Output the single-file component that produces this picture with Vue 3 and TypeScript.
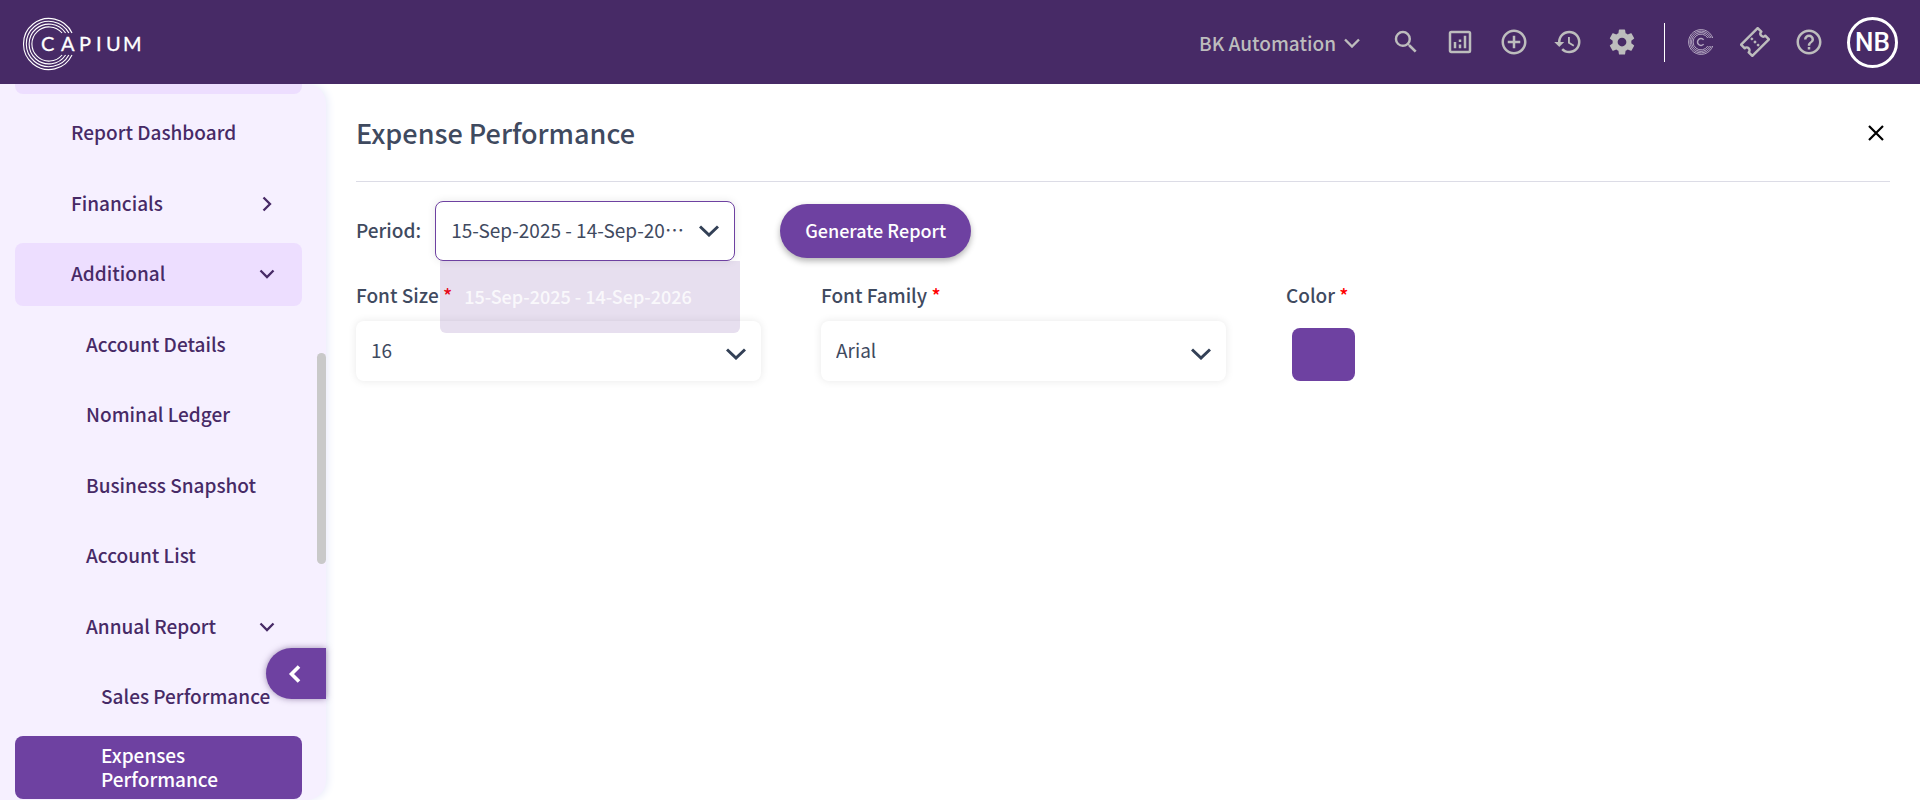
<script setup lang="ts">
import { ref } from 'vue'

interface NavItem {
  label: string
  level: 1 | 2 | 3
  state?: 'open' | 'active'
  chevron?: 'right' | 'down'
}

const items: NavItem[] = [
  { label: 'Report Dashboard', level: 1 },
  { label: 'Financials', level: 1, chevron: 'right' },
  { label: 'Additional', level: 1, state: 'open', chevron: 'down' },
  { label: 'Account Details', level: 2 },
  { label: 'Nominal Ledger', level: 2 },
  { label: 'Business Snapshot', level: 2 },
  { label: 'Account List', level: 2 },
  { label: 'Annual Report', level: 2, chevron: 'down' },
  { label: 'Sales Performance', level: 3 },
  { label: 'Expenses Performance', level: 3, state: 'active' },
]

const periodLabel = '15-Sep-2025 - 14-Sep-2026'
const period = ref(periodLabel)
const fontSize = ref('16')
const fontFamily = ref('Arial')
const color = ref('#6e41a1')
const logoRings = [25.5, 22.7, 19.9, 17.1]
const markRings = [12.4, 10.9, 9.4, 7.9]

// Ring of radius r round (cx, cy), open to the right where |y - cy| < gap.
function ring(r: number, cx: number, cy: number, gap: number): string {
  const x = cx + Math.sqrt(r * r - gap * gap)
  return `M${x} ${cy - gap}A${r} ${r} 0 1 0 ${x} ${cy + gap}`
}
</script>

<template>
  <div class="page">
    <header class="topbar">
      <a class="brand" href="#" aria-label="Capium">
        <svg width="124" height="58" viewBox="0 0 124 58">
          <g fill="none" stroke="#fff" stroke-width="1.1">
            <path v-for="r in logoRings" :key="r" :d="ring(r, 28, 31, 11)" />
          </g>
          <text x="20 40 58 75 85 102" y="38" fill="#fff" stroke="#fff" stroke-width="0.3" font-size="20">CAPIUM</text>
        </svg>
      </a>
      <div class="tools">
        <button class="company" type="button">
          BK Automation
          <svg width="16" height="10" viewBox="0 0 16 10"><path d="M1 1.500 8 8.500 15 1.500" fill="none" stroke="currentColor" stroke-width="2.4" /></svg>
        </button>
        <button class="tool" type="button" aria-label="Search">
          <svg viewBox="0 0 24 24"><path fill="currentColor" d="M15.500 14h-.79l-.28-.27A6.470 6.470 0 0 0 16 9.500 6.500 6.500 0 1 0 9.500 16c1.610 0 3.090-.59 4.230-1.570l.27.28v.79l5 4.990L20.490 19l-4.990-5zm-6 0C7.010 14 5 11.990 5 9.500S7.010 5 9.500 5 14 7.010 14 9.500 11.990 14 9.500 14z" /></svg>
        </button>
        <button class="tool" type="button" aria-label="Analytics">
          <svg viewBox="0 0 24 24"><path fill="currentColor" d="M19 3H5a2 2 0 0 0-2 2v14c0 1.100.9 2 2 2h14a2 2 0 0 0 2-2V5a2 2 0 0 0-2-2zm0 16H5V5h14v14zM7 12h2v5H7zM15 7h2v10h-2zM11 14h2v3h-2zM11 10h2v2h-2z" /></svg>
        </button>
        <button class="tool" type="button" aria-label="Add">
          <svg viewBox="0 0 24 24"><path fill="currentColor" d="M13 7h-2v4H7v2h4v4h2v-4h4v-2h-4V7zm-1-5C6.480 2 2 6.480 2 12s4.480 10 10 10 10-4.480 10-10S17.520 2 12 2zm0 18c-4.410 0-8-3.590-8-8s3.590-8 8-8 8 3.590 8 8-3.590 8-8 8z" /></svg>
        </button>
        <button class="tool" type="button" aria-label="History">
          <svg viewBox="0 0 24 24"><path fill="currentColor" d="M13 3a9 9 0 0 0-9 9H1l3.890 3.890.070.140L9 12H6c0-3.870 3.130-7 7-7s7 3.130 7 7-3.130 7-7 7c-1.930 0-3.680-.790-4.940-2.060l-1.420 1.420A8.950 8.950 0 0 0 13 21a9 9 0 0 0 0-18zm-1 5v5l4.280 2.540.720-1.210-3.500-2.080V8H12z" /></svg>
        </button>
        <button class="tool" type="button" aria-label="Settings">
          <svg viewBox="0 0 24 24"><path fill="currentColor" d="M19.500 12c0-.340-.030-.660-.070-.980l2.110-1.650c.190-.150.240-.420.120-.640l-2-3.460c-.120-.220-.390-.300-.610-.220l-2.490 1c-.520-.400-1.080-.730-1.690-.980l-.380-2.650A.490.490 0 0 0 14 2h-4c-.250 0-.460.180-.490.420l-.380 2.650c-.610.250-1.170.590-1.690.980l-2.490-1c-.230-.090-.490 0-.610.220l-2 3.460c-.130.220-.070.490.120.640l2.110 1.650c-.040.320-.070.650-.070.980s.030.660.070.980l-2.110 1.650c-.190.150-.240.420-.120.640l2 3.460c.120.220.390.300.610.220l2.490-1c.520.400 1.080.730 1.690.980l.380 2.650c.030.240.240.420.490.420h4c.250 0 .460-.180.490-.420l.380-2.650c.610-.250 1.170-.590 1.690-.980l2.490 1c.230.090.490 0 .610-.220l2-3.460c.120-.220.070-.490-.120-.640l-2.110-1.650c.040-.320.070-.640.070-.980zM12 15.500a3.500 3.500 0 1 1 0-7 3.500 3.500 0 0 1 0 7z" /></svg>
        </button>
        <span class="divider"></span>
        <button class="tool" type="button" aria-label="Capium apps">
          <svg class="mark" viewBox="0 0 26 26">
            <g fill="none" stroke="#b3a6c0">
              <path v-for="r in markRings" :key="r" :d="ring(r, 13, 13, 4)" />
              <path d="M15.600 10.900a3.400 3.400 0 1 0 0 4.200" stroke-width="1.500" />
            </g>
          </svg>
        </button>
        <button class="tool" type="button" aria-label="Tickets">
          <svg viewBox="0 0 32 32"><g transform="rotate(-45 16 16)"><path d="M3.500 7.500h25v5.500a3 3 0 0 0 0 6v5.500h-25V19a3 3 0 0 0 0-6z" fill="none" stroke="currentColor" stroke-width="2.600" stroke-linejoin="round" /><path d="M14.700 10h2.600v2.600h-2.600zM14.700 14.700h2.600v2.600h-2.600zM14.700 19.400h2.600v2.600h-2.600z" fill="currentColor" /></g></svg>
        </button>
        <button class="tool" type="button" aria-label="Help">
          <svg viewBox="0 0 24 24"><path fill="currentColor" d="M11 18h2v-2h-2v2zm1-16C6.480 2 2 6.480 2 12s4.480 10 10 10 10-4.480 10-10S17.520 2 12 2zm0 18c-4.410 0-8-3.590-8-8s3.590-8 8-8 8 3.590 8 8-3.590 8-8 8zm0-14a4 4 0 0 0-4 4h2c0-1.100.9-2 2-2s2 .9 2 2c0 2-3 1.750-3 5h2c0-2.250 3-2.500 3-5a4 4 0 0 0-4-4z" /></svg>
        </button>
        <button class="avatar" type="button">NB</button>
      </div>
    </header>

    <div class="body">
      <aside class="sidebar">
        <nav class="nav" aria-label="Reports">
          <div class="peek"></div>
          <a
            v-for="item in items"
            :key="item.label"
            href="#"
            class="item"
            :class="['level-' + item.level, item.state]"
          >
            <span class="item-label">{{ item.label }}</span>
            <svg v-if="item.chevron" class="chevron" :class="item.chevron" viewBox="0 0 16 16"><path d="M1.500 4.500 8 11l6.500-6.500" fill="none" stroke="currentColor" stroke-width="2.300" /></svg>
          </a>
        </nav>
        <div class="thumb"></div>
        <button class="collapse" type="button" aria-label="Collapse menu">
          <svg width="14" height="20" viewBox="0 0 14 20"><path d="M11 2.500 3.500 10l7.500 7.500" fill="none" stroke="#fff" stroke-width="3.600" /></svg>
        </button>
      </aside>

      <main class="content">
        <div class="heading">
          <h1>Expense Performance</h1>
          <button class="close" type="button" aria-label="Close">
            <svg width="16" height="16" viewBox="0 0 16 16"><path d="M1 1l14 14M15 1 1 15" fill="none" stroke="#000" stroke-width="2.200" /></svg>
          </button>
        </div>

        <div class="period-row">
          <label for="period">Period:</label>
          <div class="select-wrap period">
            <select id="period" v-model="period"><option>{{ periodLabel }}</option></select>
            <svg class="arrow" viewBox="0 0 20 12"><path d="M1 1.500 10 10l9-8.500" fill="none" stroke="currentColor" stroke-width="3" /></svg>
            <div class="menu">{{ periodLabel }}</div>
          </div>
          <button class="generate" type="button">Generate Report</button>
        </div>

        <div class="fields">
          <div class="field">
            <label for="size">Font Size <span class="req">*</span></label>
            <div class="select-wrap">
              <select id="size" v-model="fontSize"><option>16</option></select>
              <svg class="arrow" viewBox="0 0 20 12"><path d="M1 1.500 10 10l9-8.500" fill="none" stroke="currentColor" stroke-width="3" /></svg>
            </div>
          </div>
          <div class="field">
            <label for="family">Font Family <span class="req">*</span></label>
            <div class="select-wrap">
              <select id="family" v-model="fontFamily"><option>Arial</option></select>
              <svg class="arrow" viewBox="0 0 20 12"><path d="M1 1.500 10 10l9-8.500" fill="none" stroke="currentColor" stroke-width="3" /></svg>
            </div>
          </div>
          <div class="field">
            <label for="color">Color <span class="req">*</span></label>
            <input id="color" v-model="color" class="swatch" type="color" />
          </div>
        </div>
      </main>
    </div>
  </div>
</template>

<style scoped>
.page {
  display: flex;
  flex-direction: column;
  height: 100vh;
  overflow: hidden;
  background: #fff;
  color: #3f4a5f;
  font-family: "Noto Sans CJK KR", "Noto Sans", sans-serif;
  font-size: 19px;
  font-weight: 500;
  line-height: 24px;
}
button,
select,
input {
  margin: 0;
  border: 0;
  padding: 0;
  background: none;
  color: inherit;
  font: inherit;
}
button { cursor: pointer; }
a { color: inherit; text-decoration: none; }
svg { display: block; flex: none; }

.topbar {
  display: flex;
  position: relative;
  z-index: 1;
  flex: none;
  align-items: center;
  justify-content: space-between;
  height: 84px;
  padding: 0 22px 0 21px;
  background: #472a66;
}
.brand text { font-family: Lato, sans-serif; font-weight: 400; }
.tools {
  display: flex;
  align-items: center;
  gap: 22px;
  color: #bdbdbd;
}
.company {
  display: flex;
  align-items: center;
  gap: 8px;
  margin-right: 8px;
  padding-top: 2px;
}
.tool {
  display: grid;
  place-items: center;
  width: 32px;
  height: 32px;
}
.tool svg { width: 30px; height: 30px; }
.tool .mark { width: 26px; height: 26px; }
.divider {
  width: 1px;
  height: 39px;
  margin: 0 -2px 0 4px;
  background: #fff;
}
.avatar {
  width: 51px;
  height: 51px;
  border: 3px solid #fff;
  border-radius: 50%;
  color: #fff;
  font-family: Roboto, sans-serif;
  font-size: 26px;
}

.body {
  display: flex;
  flex: 1;
  min-height: 0;
}
.sidebar {
  position: relative;
  flex: none;
  width: 326px;
  border-radius: 0 20px 20px 0;
  background: #f6f0ff;
  box-shadow: 2px 0 8px #e9ebfa;
  color: #472a66;
}
.nav {
  display: flex;
  flex-direction: column;
  justify-content: space-between;
  box-sizing: border-box;
  height: 100%;
  padding: 0 24px 1px 15px;
}
.peek {
  height: 10px;
  border-radius: 0 0 8px 8px;
  background: #eddeff;
}
.item {
  display: flex;
  align-items: center;
  justify-content: space-between;
  box-sizing: border-box;
  height: 63px;
  padding-right: 27px;
  border-radius: 8px;
}
.item-label { padding-bottom: 2px; }
.level-1 { padding-left: 56px; }
.level-2 { padding-left: 71px; }
.level-3 { padding-left: 86px; }
.open { background: #eddeff; }
.active { padding-right: 80px; background: #6e41a1; color: #fff; }
.chevron { width: 16px; height: 16px; }
.chevron.right { transform: rotate(-90deg); }
.thumb {
  position: absolute;
  top: 269px;
  right: 0;
  width: 9px;
  height: 211px;
  border-radius: 5px;
  background: #c9c9c9;
}
.collapse {
  display: flex;
  position: absolute;
  right: 0;
  bottom: 101px;
  align-items: center;
  width: 60px;
  height: 51px;
  padding-left: 22px;
  border-radius: 26px 0 0 26px;
  background: #6e41a1;
  box-shadow: 0 0 6px #472a6680;
}

.content {
  flex: 1;
  min-width: 0;
  padding: 0 30px;
}
.heading {
  display: flex;
  align-items: center;
  justify-content: space-between;
  height: 97px;
  border-bottom: 1px solid #dcdce6;
}
h1 {
  margin: 0;
  font-size: 27px;
  font-weight: 500;
  line-height: 36px;
}
.close { padding: 6px; }
.period-row {
  display: flex;
  align-items: center;
  gap: 14px;
  padding-top: 19px;
}
.period-row > label { padding-bottom: 2px; }
.select-wrap {
  position: relative;
  color: #3f4a5f;
}
.period { width: 300px; }
select {
  display: block;
  box-sizing: border-box;
  width: 100%;
  height: 60px;
  padding: 0 49px 2px 15px;
  border-radius: 8px;
  appearance: none;
  background: #fff;
  box-shadow: 0 0 8px #00000018;
  font-weight: 400;
  text-overflow: ellipsis;
}
.period select { border: 1px solid #6e41a1; }
.arrow {
  position: absolute;
  top: 27px;
  right: 15px;
  width: 20px;
  height: 12px;
  color: #334056;
  pointer-events: none;
}
.period .arrow { top: 24px; right: 16px; }
.menu {
  position: absolute;
  z-index: 2;
  top: 60px;
  left: 5px;
  box-sizing: border-box;
  width: 100%;
  padding: 23px 24px 25px;
  border-radius: 0 0 6px 6px;
  background: #6e41a12b;
  color: #ffffffcc;
  font-size: 18px;
  white-space: nowrap;
}
.generate {
  height: 54px;
  margin-left: 31px;
  padding: 0 25px 2px;
  border-radius: 27px;
  background: #6e41a1;
  box-shadow: 0 3px 6px #0000004d;
  color: #fff;
  font-size: 18px;
}
.fields {
  display: grid;
  grid-template-columns: repeat(2, minmax(0, 405px)) 1fr;
  gap: 60px;
  padding-top: 22px;
}
.field > label {
  display: block;
  margin-bottom: 14px;
}
.req { color: #f00; }
.swatch {
  display: block;
  width: 63px;
  height: 53px;
  margin: 21px 0 0 6px;
}
.swatch::-webkit-color-swatch-wrapper { padding: 0; }
.swatch::-webkit-color-swatch {
  border: 0;
  border-radius: 8px;
}
</style>

<style>
body { margin: 0; }
</style>
